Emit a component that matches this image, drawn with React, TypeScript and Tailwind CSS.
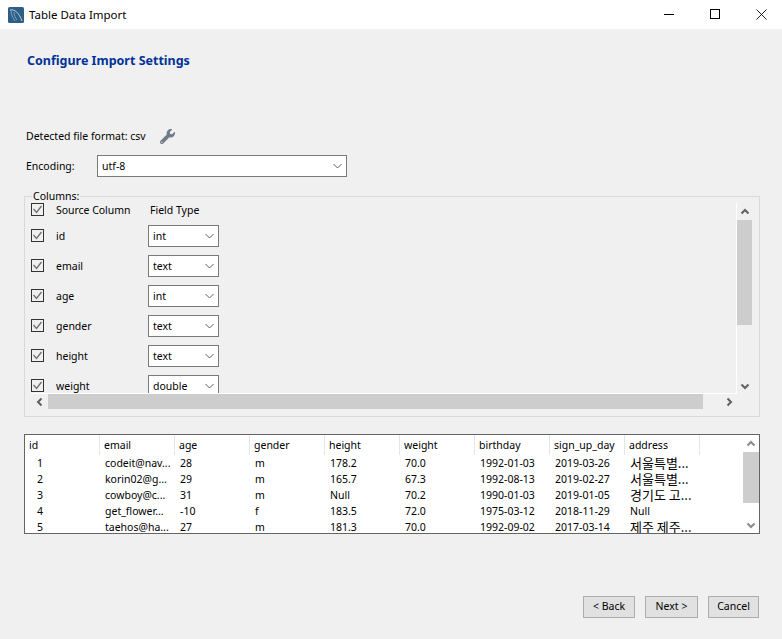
import React from "react";
import { FaWrench } from "react-icons/fa";

const columns = [
  { name: "id", type: "int" },
  { name: "email", type: "text" },
  { name: "age", type: "int" },
  { name: "gender", type: "text" },
  { name: "height", type: "text" },
  { name: "weight", type: "double" },
];

const headers = ["id", "email", "age", "gender", "height", "weight", "birthday", "sign_up_day", "address"];

const rows = [
  ["1", "codeit@nav...", "28", "m", "178.2", "70.0", "1992-01-03", "2019-03-26", "서울특별..."],
  ["2", "korin02@g...", "29", "m", "165.7", "67.3", "1992-08-13", "2019-02-27", "서울특별..."],
  ["3", "cowboy@c...", "31", "m", "Null", "70.2", "1990-01-03", "2019-01-05", "경기도 고..."],
  ["4", "get_flower...", "-10", "f", "183.5", "72.0", "1975-03-12", "2018-11-29", "Null"],
  ["5", "taehos@ha...", "27", "m", "181.3", "70.0", "1992-09-02", "2017-03-14", "제주 제주..."],
];

// thick little arrows of the scrollbars
const Arrow = ({ dir, light }: { dir: "up" | "down" | "left" | "right"; light?: boolean }) => {
  const points = {
    up: "1.5,6.5 5,3 8.5,6.5",
    down: "1.5,3.5 5,7 8.5,3.5",
    left: "6.5,1.5 3,5 6.5,8.5",
    right: "3.5,1.5 7,5 3.5,8.5",
  }[dir];
  return (
    <svg width="10" height="10" viewBox="0 0 10 10" fill="none">
      <polyline points={points} stroke={light ? "#8a8a8a" : "#606060"} strokeWidth="2" />
    </svg>
  );
};

const Chevron = () => (
  <svg width="9" height="6" viewBox="0 0 9 6" fill="none">
    <polyline points="0.5,1 4.5,5 8.5,1" stroke="#606060" strokeWidth="1" />
  </svg>
);

const Checkbox = () => (
  <div className="w-[13px] h-[13px] mb-[1px] border border-[#333333] flex items-center justify-center shrink-0">
    <svg width="11" height="11" viewBox="0 0 11 11" fill="none">
      <polyline points="1.5,5 4.5,8.5 9.5,2" stroke="#707070" strokeWidth="1.3" />
    </svg>
  </div>
);

const Select = ({ value, className }: { value: string; className: string }) => (
  <div
    className={`h-[22px] bg-white border border-[#7a7a7a] pl-[4px] pr-[4px] flex items-center justify-between ${className}`}
  >
    <span className="pt-[1px]">{value}</span>
    <Chevron />
  </div>
);

const Logo = () => (
  <svg width="16" height="16" viewBox="0 0 16 16">
    <rect width="16" height="16" rx="1.5" fill="#2d5f86" />
    <path d="M2 3 C7 2 11 6 14 14" stroke="#b9cfdf" strokeWidth="1" fill="none" />
    <path d="M3 3 C3 8 5 11 7 14 M6 5 C6 8 7 10 9 13" stroke="#8fb0c8" strokeWidth="0.8" fill="none" />
  </svg>
);

const Button = ({ label, className }: { label: string; className: string }) => (
  <button className={`h-[22px] bg-[#e1e1e1] border border-[#adadad] ${className}`}>{label}</button>
);

export default function App() {
  return (
    <div className="w-[782px] h-screen bg-[#f0f0f0] overflow-hidden text-[10.5px] text-black font-['Noto_Sans',sans-serif]">
      <header className="h-[29px] bg-white flex items-center pl-[8px]">
        <Logo />
        <span className="ml-[5px] text-[11.5px]">Table Data Import</span>
        <div className="ml-auto flex items-center">
          <svg width="11" height="11" viewBox="0 0 11 11" className="mr-[35px]">
            <line x1="0" y1="5.5" x2="10" y2="5.5" stroke="#000" />
          </svg>
          <svg width="11" height="11" viewBox="0 0 11 11" className="mr-[35px]">
            <rect x="0.5" y="0.5" width="9" height="9" fill="none" stroke="#000" />
          </svg>
          <svg width="11" height="11" viewBox="0 0 11 11" className="mr-[15px]">
            <path d="M0.5 0.5 L10.5 10.5 M10.5 0.5 L0.5 10.5" stroke="#000" strokeWidth="0.9" />
          </svg>
        </div>
      </header>

      <main className="pl-[24px] w-[760px]">
        <h1 className="mt-[24px] ml-[3px] h-[16px] leading-[16px] text-[12.5px] font-bold text-[#003399]">
          Configure Import Settings
        </h1>

        <div className="mt-[59px] ml-[2px] h-[16px] flex items-center">
          <span className="pt-[1px]">Detected file format: csv</span>
          <FaWrench className="ml-[14px] w-[15px] h-[15px] text-[#6f7b88]" />
        </div>

        <div className="mt-[11px] ml-[2px] flex items-center">
          <span className="w-[71px] pt-[1px]">Encoding:</span>
          <Select value="utf-8" className="w-[250px]" />
        </div>

        {/* Columns group */}
        <section className="relative mt-[19px] w-[736px] h-[221px] border border-[#d9d9d9] pt-[6px] pb-[7px] pl-[6px] pr-[7px]">
          <span className="absolute left-[7px] -top-[8px] px-[1px] bg-[#f0f0f0] leading-[14px]">Columns:</span>

          <div className="flex h-[191px]">
            <div className="w-[706px] border-r border-b border-white overflow-hidden">
              <div className="flex items-center h-[14px]">
                <Checkbox />
                <span className="w-[94px] ml-[12px] pt-[1px] tracking-[-0.04px]">Source Column</span>
                <span className="pt-[1px]">Field Type</span>
              </div>
              <div className="mt-[4px]">
                {columns.map((col) => (
                  <div key={col.name} className="flex items-center h-[30px]">
                    <Checkbox />
                    <span className="w-[92px] ml-[12px] pt-[1px]">{col.name}</span>
                    <Select value={col.type} className="w-[71px]" />
                  </div>
                ))}
              </div>
            </div>
            <div className="w-[15px] flex flex-col">
              <div className="h-[17px] flex items-center justify-center">
                <Arrow dir="up" />
              </div>
              <div className="flex-1">
                <div className="h-[105px] bg-[#cdcdcd]" />
              </div>
              <div className="h-[17px] flex items-center justify-center">
                <Arrow dir="down" />
              </div>
            </div>
          </div>

          <div className="flex h-[15px] w-[706px]">
            <div className="w-[17px] flex items-center justify-center">
              <Arrow dir="left" />
            </div>
            <div className="flex-1">
              <div className="w-[655px] h-full bg-[#cdcdcd]" />
            </div>
            <div className="w-[17px] flex items-center justify-center">
              <Arrow dir="right" />
            </div>
          </div>
        </section>

        {/* Preview table */}
        <section className="mt-[17px] w-[736px] h-[100px] border border-[#646464] bg-white flex">
          <div className="flex-1 overflow-hidden">
            <div className="grid grid-cols-[repeat(9,75px)] h-[20px]">
              {headers.map((h) => (
                <div key={h} className="pl-[4px] border-r border-[#e5e5e5] leading-[20px]">
                  {h}
                </div>
              ))}
            </div>
            {rows.map((row) => (
              <div key={row[0]} className="grid grid-cols-[repeat(9,75px)] h-[16px] leading-[16px]">
                {row.map((cell, i) => (
                  <div
                    key={i}
                    className={`whitespace-nowrap ${i === 0 ? "pl-[12px]" : "pl-[5px]"} ${
                      i === 8 && cell !== "Null" ? "text-[13px] font-['Noto_Sans_CJK_KR',sans-serif]" : ""
                    }`}
                  >
                    {cell}
                  </div>
                ))}
              </div>
            ))}
          </div>
          <div className="w-[16px] flex flex-col">
            <div className="h-[17px] flex items-center justify-center">
              <Arrow dir="up" light />
            </div>
            <div className="flex-1">
              <div className="h-[51px] bg-[#cdcdcd]" />
            </div>
            <div className="h-[17px] flex items-center justify-center">
              <Arrow dir="down" light />
            </div>
          </div>
        </section>

        <div className="mt-[62px] w-[735px] flex justify-end gap-[10px]">
          <Button label="< Back" className="w-[52px]" />
          <Button label="Next >" className="w-[53px]" />
          <Button label="Cancel" className="w-[51px]" />
        </div>
      </main>
    </div>
  );
}
